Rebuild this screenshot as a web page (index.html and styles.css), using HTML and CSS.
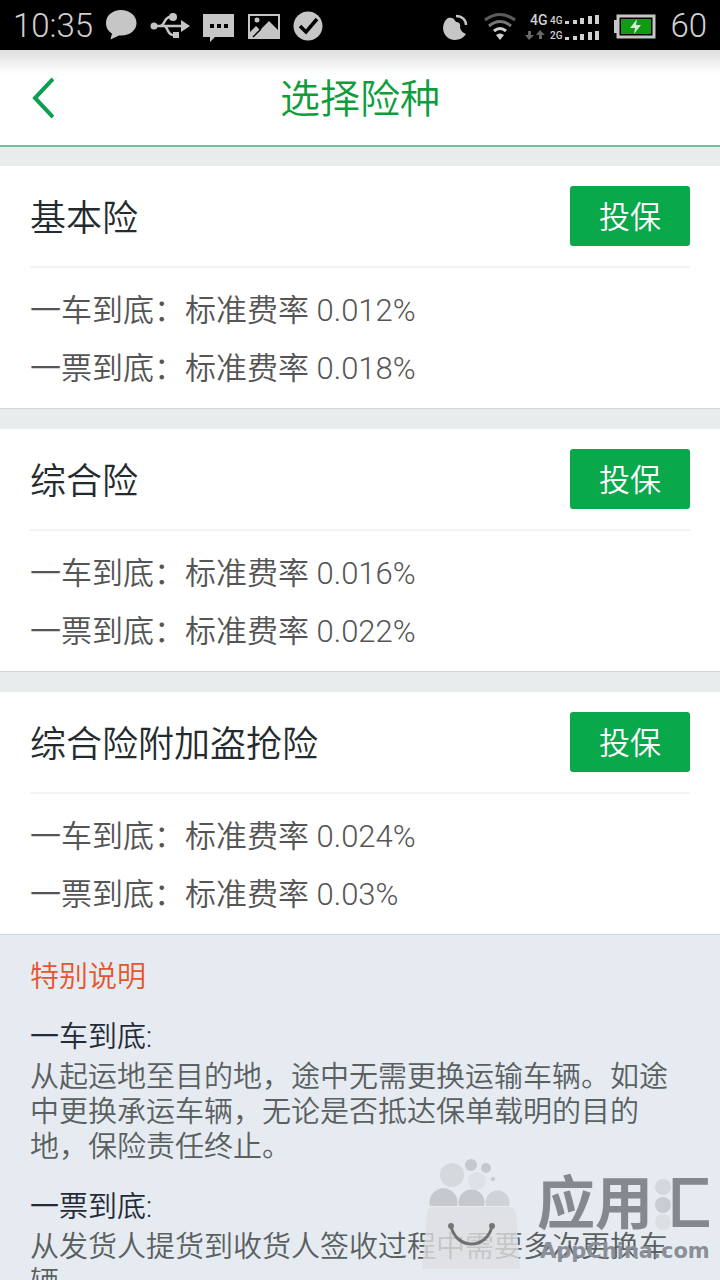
FILE: index.html
```html
<!DOCTYPE html>
<html lang="zh-CN">
<head>
    <meta charset="UTF-8">
    <meta name="viewport" content="width=device-width, initial-scale=1.0">
    <title>选择险种</title>
    <link rel="stylesheet" href="styles.css">
</head>
<body>

<!-- Status bar -->
<div class="status-bar">
    <span class="status-text">10:35</span>
    <div class="status-left">
        <svg width="32" height="32" viewBox="0 0 32 32" fill="#c6c6c6">
            <path d="M16 1C7.500 1 1 6.500 1 14c0 5 2.500 8.500 6 10.500L5.500 30.500 14 26.500C24 27.500 31.500 21.500 31.500 14 31.500 6.500 24.500 1 16 1z"/>
        </svg>
        <svg width="40" height="32" viewBox="0 0 40 32" fill="none" stroke="#c6c6c6" stroke-width="2.500">
            <path d="M4 17h28M10 17c5 0 4-9 10-9h3M14 17c4 0 3 9 9 9h3"/>
            <circle cx="4" cy="17" r="3.500" fill="#c6c6c6" stroke="none"/>
            <circle cx="23" cy="8" r="4" fill="#c6c6c6" stroke="none"/>
            <path d="M23 23h6v6h-6zM31 11l9 6-9 6z" fill="#c6c6c6" stroke="none"/>
        </svg>
        <svg width="32" height="32" viewBox="0 0 32 32">
            <path d="M0 5h31v23H12l-5 5v-5H0z" fill="#c6c6c6"/>
            <path d="M7 15h4v4H7zM14 15h4v4h-4zM21 15h4v4h-4z" fill="#000"/>
        </svg>
        <svg width="32" height="32" viewBox="0 0 32 32">
            <path d="M1 6h30v23H1z" fill="none" stroke="#c6c6c6" stroke-width="2"/>
            <circle cx="9" cy="11" r="2.500" fill="#c6c6c6"/>
            <path d="M1 29v-5l7-7 4 4 9-9 10 10v7z" fill="#c6c6c6"/>
            <path d="M5 28l8-8" stroke="#000" stroke-width="1.500"/>
        </svg>
        <svg width="30" height="32" viewBox="0 0 30 32">
            <circle cx="15" cy="17" r="14.500" fill="#c6c6c6"/>
            <path d="M7 17l6 6L24 10" fill="none" stroke="#000" stroke-width="3.500"/>
        </svg>
    </div>
    <div class="status-right">
        <svg width="28" height="32" viewBox="0 0 28 32">
            <path d="M6 9c4-1 6 0 8 4 3 0 5 2 4 6 1 3 3 5 6 6C20 32 9 33 4 27-1 21 1 12 6 9z" fill="#c6c6c6"/>
            <path d="M14 7c6 0 10 4 10 9" fill="none" stroke="#c6c6c6" stroke-width="2.500"/>
        </svg>
        <svg width="32" height="32" viewBox="0 0 32 32" fill="none" stroke-width="3">
            <path d="M1 11q15-11 30 0" stroke="#5c5c5c"/>
            <path d="M5 17q11-9 22 0" stroke="#777"/>
            <path d="M10 22q6-5 12 0" stroke="#d0d0d0"/>
            <path d="M12 26q4-3 8 0l-4 5z" fill="#d0d0d0"/>
        </svg>
        <svg width="70" height="32" viewBox="0 0 70 32" fill="#d0d0d0">
            <text class="signal-big" x="0" y="16">4G</text>
            <text class="signal-small" x="20" y="15">4G</text>
            <text class="signal-small" x="20" y="30">2G</text>
            <path d="M35 12h4v3h-4zM43 11h4v4h-4zM50 9h4v6h-4zM58 7h4v8h-4zM65 6h4v9h-4zM35 28h4v3h-4zM43 27h4v4h-4zM50 25h4v6h-4zM58 23h4v8h-4zM65 22h4v9h-4z"/>
            <path d="M-2 22h3v4h3l-5 5-4-5h3zM9 30h3v-4h3l-5-5-4 5h3z" fill="#666"/>
        </svg>
        <svg width="42" height="32" viewBox="0 0 42 32">
            <path d="M0 11h3v13H0z" fill="#c6c6c6"/>
            <path d="M4 7h36v21H4z" fill="none" stroke="#c6c6c6" stroke-width="3"/>
            <path d="M7 10h30v15H7z" fill="#109b12"/>
            <path d="M23 10l-7 9h5l-1 6 7-9h-5z" fill="#d5ead5"/>
        </svg>
        <span class="status-text">60</span>
    </div>
</div>

<!-- Page header -->
<header class="header">
    <button class="back-btn" aria-label="返回">
        <svg width="24" height="44" viewBox="0 0 24 44" fill="none" stroke="#0d9f50" stroke-width="4">
            <path d="M23 3L5 22l18 19"/>
        </svg>
    </button>
    <h1>选择险种</h1>
</header>

<main class="content">
    <section class="card">
        <div class="card-header">
            <h2>基本险</h2>
            <button class="insure-btn">投保</button>
        </div>
        <div class="card-body">
            <p>一车到底：标准费率 0.012%</p>
            <p>一票到底：标准费率 0.018%</p>
        </div>
    </section>

    <section class="card">
        <div class="card-header">
            <h2>综合险</h2>
            <button class="insure-btn">投保</button>
        </div>
        <div class="card-body">
            <p>一车到底：标准费率 0.016%</p>
            <p>一票到底：标准费率 0.022%</p>
        </div>
    </section>

    <section class="card">
        <div class="card-header">
            <h2>综合险附加盗抢险</h2>
            <button class="insure-btn">投保</button>
        </div>
        <div class="card-body">
            <p>一车到底：标准费率 0.024%</p>
            <p>一票到底：标准费率 0.03%</p>
        </div>
    </section>

    <!-- Special notes -->
    <section class="notes">
        <h2>特别说明</h2>
        <h3>一车到底:</h3>
        <p>从起运地至目的地，途中无需更换运输车辆。如途中更换承运车辆，无论是否抵达保单载明的目的地，保险责任终止。</p>
        <h3>一票到底:</h3>
        <p>从发货人提货到收货人签收过程中需要多次更换车辆</p>
    </section>
</main>

<!-- Watermark -->
<svg class="watermark" width="300" height="130" viewBox="0 0 300 130">
    <defs>
        <!-- hides the left strokes of the last character, dots take their place -->
        <linearGradient id="hui" gradientUnits="userSpaceOnUse" x1="232" y1="0" x2="292" y2="0">
            <stop offset="0.34" stop-color="#85898f" stop-opacity="0"/>
            <stop offset="0.34" stop-color="#85898f"/>
        </linearGradient>
    </defs>
    <g fill="#c6c8cc">
        <circle cx="32" cy="25" r="12" fill="#d5d8dc"/>
        <circle cx="51" cy="15" r="6"/>
        <circle cx="66" cy="18" r="5"/>
        <circle cx="57" cy="31" r="9" fill="#dde2e8"/>
        <circle cx="73" cy="29" r="2"/>
        <path d="M10 56a14 14 0 1 1 27 0z"/>
        <path d="M39 56a13 13 0 1 1 25 0z"/>
        <path d="M66 56a12 12 0 1 1 23 0z" fill="#cfd2d7"/>
    </g>
    <path d="M12 57h77q6 0 7 8l4 54H2L7 65q1-8 5-8z" fill="#dddfe1" opacity="0.8"/>
    <path d="M31 76c5 24 36 24 41 0" fill="none" stroke="#707070" stroke-width="3"/>
    <circle cx="31" cy="76" r="3" fill="#777"/>
    <circle cx="72" cy="76" r="3" fill="#777"/>
    <circle cx="243" cy="37" r="8" fill="#d3d7de"/>
    <circle cx="243" cy="55" r="8" fill="#c8ccd4"/>
    <circle cx="243" cy="72" r="8" fill="#dadfe2"/>
    <text class="mark-name" x="117" y="74" fill="#85898f">应用<tspan fill="url(#hui)">汇</tspan></text>
    <text class="mark-site" x="120" y="108" fill="#8b8f98">AppChina.com</text>
</svg>

</body>
</html>
```
FILE: styles.css
```css
* {
    box-sizing: border-box;
}

body {
    font-family: Roboto, 'Noto Sans CJK SC', sans-serif;
    font-weight: 350;
    background-color: #e8ecec;
    display: flex;
    flex-direction: column;
    height: 100vh;
    margin: 0;
    overflow: hidden;
    position: relative;
}

h1, h2, h3, p {
    margin: 0;
    font-weight: 350;
}

button {
    font-family: inherit;
    font-weight: 350;
    border: none;
    cursor: pointer;
}

.status-bar {
    display: flex;
    align-items: center;
    flex-shrink: 0;
    height: 50px;
    padding: 0 13px;
    background-color: #000;
}

.status-bar svg {
    display: block;
    overflow: visible;
}

.status-text {
    font-size: 33px;
    font-weight: 300;
    color: #d0d0d0;
}

.status-left {
    display: flex;
    gap: 13px;
    margin-left: 12px;
}

.status-right {
    display: flex;
    align-items: center;
    gap: 14px;
    margin-left: auto;
}

.signal-big {
    font-size: 14px;
    font-weight: 500;
}

.signal-small {
    font-size: 10px;
    font-weight: 500;
}

.header {
    display: grid;
    grid-template-columns: 60px 1fr 60px;
    align-items: center;
    flex-shrink: 0;
    height: 97px;
    background: linear-gradient(#dedede, #fff 24px);
    border-bottom: 2px solid #6fc09c;
}

.header h1 {
    padding-bottom: 4px;
    font-size: 40px;
    text-align: center;
    color: #0f9d3c;
}

.back-btn {
    height: 60px;
    padding: 0 0 0 30px;
    background: transparent;
}

.back-btn svg {
    display: block;
}

.content {
    flex: 1;
    min-height: 0;
    padding-top: 19px;
    overflow: hidden;
}

.card {
    padding: 0 30px 10px;
    margin-bottom: 20px;
    background-color: #fff;
    border-bottom: 1px solid #d0d6d6;
}

.card-header {
    display: flex;
    justify-content: space-between;
    align-items: center;
    height: 102px;
    border-bottom: 2px solid #f2f4f4;
}

.card-header h2 {
    padding-bottom: 2px;
    font-size: 36px;
    color: #242b2f;
}

.insure-btn {
    width: 120px;
    height: 60px;
    padding: 0 0 4px;
    border-radius: 3px;
    background-color: #08a84b;
    color: #fff;
    font-size: 31px;
}

.card-body {
    padding-top: 14px;
}

.card-body p {
    font-size: 31px;
    line-height: 58px;
    color: #555;
}

.notes {
    margin-top: -20px;
    padding: 25px 30px 0;
    background-color: #e6ebf2;
    font-size: 29px;
    line-height: 35px;
}

.notes h2,
.notes h3 {
    font-size: 29px;
}

.notes h2 {
    color: #e4572e;
}

.notes h3 {
    margin: 25px 0 5px;
    color: #252a38;
}

.notes p {
    color: #59605f;
}

.watermark {
    position: absolute;
    right: 0;
    bottom: 0;
}

.mark-name {
    font-family: 'Noto Sans CJK SC', sans-serif;
    font-size: 58px;
    font-weight: 700;
}

.mark-site {
    font-family: 'DejaVu Sans', sans-serif;
    font-size: 21px;
    font-weight: 700;
}
```
